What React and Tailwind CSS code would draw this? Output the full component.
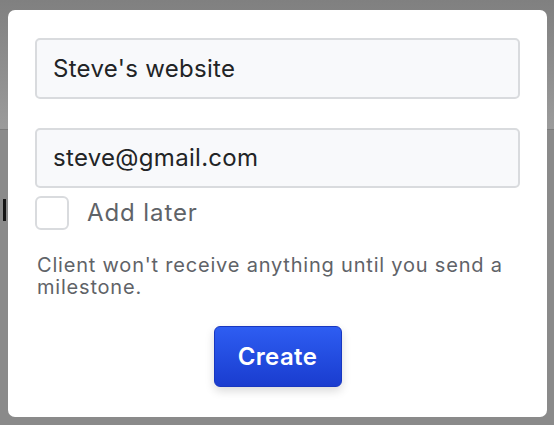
export default function App() {
  return (
    <div
      className="relative w-[554px] h-[425px] overflow-hidden bg-[#8a8a8a]"
      style={{ fontFamily: "Inter, 'Noto Sans', sans-serif" }}
    >
      <div className="h-[130px] bg-gradient-to-b from-[#808080] to-[#9b9b9b] border-b border-[#7c7c7c]" />
      <div className="mt-[69px] ml-[3px] w-[3px] h-[22px] bg-[#151515]" />

      <div className="absolute left-[8px] top-[10px] w-[539px] h-[407px] bg-white rounded-[7px] px-[27px] pt-[28px] flex flex-col">
        <div className="h-[61px] rounded-[5px] border-2 border-[#d9dbde] bg-[#f8f9fb] flex items-center pl-[16px] text-[24px] tracking-[0.3px] text-[#222426]">
          Steve's website
        </div>
        <div className="mt-[29px] h-[60px] rounded-[5px] border-2 border-[#d9dbde] bg-[#f8f9fb] flex items-center pl-[16px] text-[24px] tracking-[0.3px] text-[#222426]">
          steve@gmail.com
        </div>
        <div className="mt-[8px] flex items-center h-[34px]">
          <div className="w-[34px] h-[34px] rounded-[6px] border-2 border-[#d9dbde] bg-white" />
          <span className="ml-[18px] text-[24px] tracking-[0.9px] text-[#5f6368]">Add later</span>
        </div>
        <p className="mt-[24px] text-[20px] leading-[22px] tracking-[0.8px] text-[#5f6368] pl-[2px]">
          Client won't receive anything until you send a milestone.
        </p>
        <div className="mt-[28px] flex justify-center">
          <button className="w-[128px] h-[61px] rounded-[6px] bg-gradient-to-b from-[#2e5df2] to-[#1a3ccf] border border-[#1837c0] text-white text-[24px] tracking-[0.4px] font-semibold shadow-[0_4px_10px_rgba(0,0,0,0.15)]">
            Create
          </button>
        </div>
      </div>
    </div>
  );
}
